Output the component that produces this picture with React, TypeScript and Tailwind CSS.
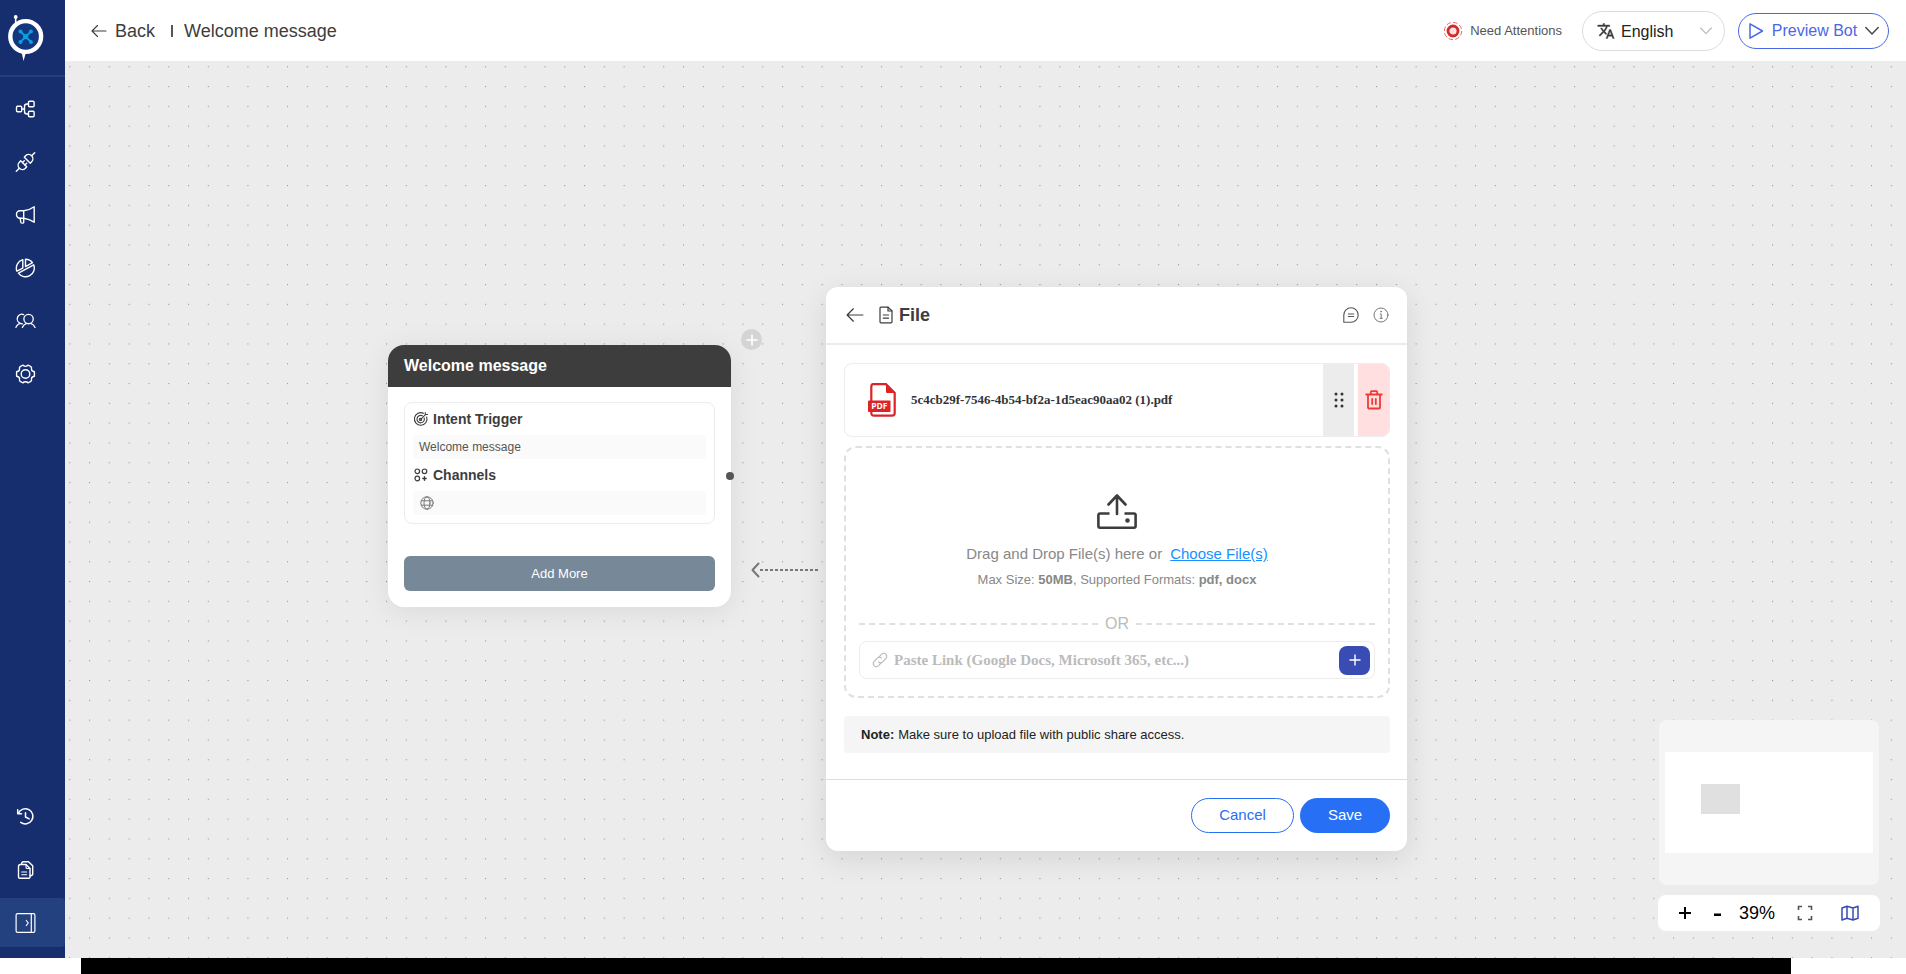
import React from 'react';

type IconProps = { className?: string };

const stroke = {
  fill: 'none',
  stroke: 'currentColor',
  strokeLinecap: 'round' as const,
  strokeLinejoin: 'round' as const,
};

const LogoIcon: React.FC<IconProps> = ({ className }) => (
  <svg viewBox="0 0 36 46" className={className} aria-hidden="true">
    <path d="M7.700 2v8" stroke="#fff" strokeWidth="1.600" />
    <circle cx="7.700" cy="1.900" r="1.900" fill="#fff" />
    <path d="M12.500 36h9c-1 1.500-3.500 1.500-4 3L15.500 46 14 39z" fill="#fff" />
    <circle cx="17.700" cy="21.500" r="15.400" fill="#12377f" stroke="#fff" strokeWidth="4.400" />
    <path d="M12.500 16.500l10.400 10.400M22.900 16.500L12.500 26.900" stroke="#0b9fe0" strokeWidth="1.800" />
    <circle cx="17.700" cy="21.700" r="2.600" fill="#0b9fe0" />
    <circle cx="12.500" cy="16.600" r="2" fill="#0b9fe0" />
    <circle cx="22.900" cy="16.600" r="2" fill="#0b9fe0" />
    <circle cx="12.500" cy="26.900" r="2" fill="#0b9fe0" />
    <circle cx="22.900" cy="26.900" r="2" fill="#0b9fe0" />
  </svg>
);

const FlowIcon: React.FC<IconProps> = ({ className }) => (
  <svg viewBox="0 0 20 20" className={className} {...stroke} strokeWidth="1.400" aria-hidden="true">
    <rect x="1" y="7.300" width="5.200" height="5.400" rx="1" />
    <rect x="13" y="2.300" width="5.600" height="5.400" rx="1" />
    <rect x="13" y="12.300" width="5.600" height="5.400" rx="1" />
    <path d="M6.200 10H9M13 5h-1.500C10 5 9 6 9 7.500v5C9 14 10 15 11.500 15H13" />
  </svg>
);

const PlugIcon: React.FC<IconProps> = ({ className }) => (
  <svg viewBox="0 0 20 20" className={className} {...stroke} strokeWidth="1.400" aria-hidden="true">
    <path d="M.8 19.200l2.800-2.800M16.400 3.600L19.200.8" />
    <path d="M5.200 8.800l6 6-1.500 1.600a4.250 4.250 0 0 1-6-6z" />
    <path d="M14.800 11.200l-6-6 1.500-1.600a4.250 4.250 0 0 1 6 6z" />
    <path d="M7 10.600l1.800-1.800M9.400 13l1.800-1.800" />
  </svg>
);

const MegaphoneIcon: React.FC<IconProps> = ({ className }) => (
  <svg viewBox="0 0 20 20" className={className} {...stroke} strokeWidth="1.400" aria-hidden="true">
    <path d="M8.200 5.800c4-.3 7.500-1.800 10.500-4v15.400c-3-2-6.500-3.500-10.500-4H4.500A3.500 3.500 0 0 1 1 9.700v-.4a3.500 3.500 0 0 1 3.500-3.500z" />
    <path d="M8.200 5.800v11.700c0 .8-2.500.8-2.800 0l-.8-4.300" />
  </svg>
);

const ChartIcon: React.FC<IconProps> = ({ className }) => (
  <svg viewBox="0 0 20 20" className={className} {...stroke} strokeWidth="1.400" aria-hidden="true">
    <path d="M10 1.200a8.800 8.800 0 0 1 7 3.400L10 8.600z" />
    <path d="M18.200 6.800A8.800 8.800 0 0 1 2.900 15.200z" />
    <path d="M7.300 1.700v8.400l-5.900 3.100A8.800 8.800 0 0 1 7.300 1.700z" />
  </svg>
);

const UsersIcon: React.FC<IconProps> = ({ className }) => (
  <svg viewBox="0 0 22 20" className={className} {...stroke} strokeWidth="1.400" aria-hidden="true">
    <circle cx="14.200" cy="8" r="4.900" />
    <path d="M7.700 16.700c.8-2 2.300-3.200 4-3.900M21 16.700c-.8-2-2.300-3.200-4-3.900" />
    <path d="M9 3.200a4.900 4.900 0 0 0-3.500 9.200C3.300 13 1.700 14.500 1 16.700M5.500 12.400l2.200.6" />
  </svg>
);

const SettingsIcon: React.FC<IconProps> = ({ className }) => (
  <svg viewBox="0 0 20 20" className={className} {...stroke} strokeWidth="1.400" aria-hidden="true">
    <circle cx="10" cy="10" r="4.300" />
    <path d="M7.600 1.200c.8 1.500 4 1.500 4.800 0l2.600 1.100c1 .5 1.300 1.300 1 2.500-.2 1.200.6 2.500 2.900 2.900v4.600c-2.300.4-3.100 1.700-2.900 2.900.3 1.200 0 2-1 2.500l-2.600 1.100c-.8-1.500-4-1.500-4.800 0L5 17.700c-1-.5-1.300-1.300-1-2.500.2-1.200-.6-2.500-2.900-2.900V7.700C3.400 7.300 4.200 6 4 4.800c-.3-1.200 0-2 1-2.500z" />
  </svg>
);

const HistoryIcon: React.FC<IconProps> = ({ className }) => (
  <svg viewBox="0 0 20 20" className={className} {...stroke} strokeWidth="1.600" aria-hidden="true">
    <path d="M2.500 6.500A8 8 0 1 1 5 16.200" />
    <path d="M1.800 3v4h4" />
    <path d="M10 6v4.500l3.800 2" />
  </svg>
);

const DocsIcon: React.FC<IconProps> = ({ className }) => (
  <svg viewBox="0 0 20 20" className={className} {...stroke} strokeWidth="1.400" aria-hidden="true">
    <path d="M5 4.500h5.500l4 4V17c0 .8-.5 1.300-1.300 1.300H4.300C3.500 18.300 3 17.800 3 17V6.500c0-1.200.8-2 2-2z" />
    <path d="M6 4.300C6 2.500 6.700 1.800 8 1.800h5l4.200 4V14c0 1-.8 1.700-2.600 1.700" />
    <path d="M10.500 4.500v2.700c0 .8.500 1.300 1.300 1.300h2.700M6.200 12h5M6.200 14.700h5" strokeWidth="1.100" />
  </svg>
);

const PanelIcon: React.FC<IconProps> = ({ className }) => (
  <svg viewBox="0 0 20 20" className={className} {...stroke} strokeWidth="1.200" aria-hidden="true">
    <rect x=".6" y=".6" width="18.800" height="18.800" rx="1.500" />
    <path d="M15.800 1v18" />
    <path d="M10.800 7.500L12.800 10l-2 2.500" />
  </svg>
);

const ArrowLeftIcon: React.FC<IconProps> = ({ className }) => (
  <svg viewBox="0 0 16 16" className={className} {...stroke} strokeWidth="1.100" aria-hidden="true">
    <path d="M15 8H1.200M6.500 2.500L1 8l5.500 5.500" />
  </svg>
);

const AlertIcon: React.FC<IconProps> = ({ className }) => (
  <svg viewBox="0 0 20 20" className={className} aria-hidden="true">
    <circle cx="10" cy="10" r="8.700" fill="none" stroke="#ef6a6a" strokeWidth="1" strokeDasharray="4.500 2.300" />
    <circle cx="10" cy="10" r="5" fill="#fde0e0" stroke="#d02c2c" strokeWidth="2.800" />
  </svg>
);

const TranslateIcon: React.FC<IconProps> = ({ className }) => (
  <svg viewBox="0 0 24 24" className={className} fill="currentColor" stroke="currentColor" strokeWidth=".5" aria-hidden="true">
    <path d="M12.870 15.070l-2.540-2.510.03-.03A17.520 17.520 0 0 0 14.070 6H17V4h-7V2H8v2H1v2h11.170C11.500 7.920 10.440 9.750 9 11.350 8.070 10.320 7.300 9.190 6.690 8h-2c.73 1.630 1.730 3.170 2.980 4.560l-5.090 5.020L4 19l5-5 3.110 3.110.76-2.040zM18.500 10h-2L12 22h2l1.120-3h4.750L21 22h2l-4.500-12zm-2.620 7l1.620-4.330L19.120 17h-3.240z" />
  </svg>
);

const ChevronIcon: React.FC<IconProps> = ({ className }) => (
  <svg viewBox="0 0 14 10" className={className} {...stroke} strokeWidth="1.400" aria-hidden="true">
    <path d="M.8 1.500L7 8l6.200-6.500" />
  </svg>
);

const PlayIcon: React.FC<IconProps> = ({ className }) => (
  <svg viewBox="0 0 16 18" className={className} {...stroke} strokeWidth="1.500" aria-hidden="true">
    <path d="M2 1.800v14.400L14.500 9z" />
  </svg>
);

const TargetIcon: React.FC<IconProps> = ({ className }) => (
  <svg viewBox="0 0 16 16" className={className} {...stroke} strokeWidth="1.100" aria-hidden="true">
    <path d="M10.500 2.300A6.300 6.300 0 1 0 13.700 6" />
    <path d="M9.300 4.800A3.700 3.700 0 1 0 11.200 7" />
    <circle cx="7.500" cy="8.500" r="1.200" />
    <path d="M7.700 8.300l5-5M12.300 1.500V3.500h2.200" />
  </svg>
);

const ChannelsIcon: React.FC<IconProps> = ({ className }) => (
  <svg viewBox="0 0 14 14" className={className} {...stroke} strokeWidth="1.200" aria-hidden="true">
    <circle cx="3.300" cy="3.300" r="2.300" />
    <circle cx="10.500" cy="3.300" r="2.300" />
    <circle cx="3.300" cy="10.500" r="2.300" />
    <path d="M10.500 8.800v3.400M8.800 10.500h3.400" strokeWidth="1.400" />
  </svg>
);

const GlobeIcon: React.FC<IconProps> = ({ className }) => (
  <svg viewBox="0 0 14 14" className={className} {...stroke} strokeWidth="1" aria-hidden="true">
    <circle cx="7" cy="7" r="6.200" />
    <ellipse cx="7" cy="7" rx="3" ry="6.200" />
    <path d="M1.500 4.800h11M1.500 9.200h11" />
  </svg>
);

const FileIcon: React.FC<IconProps> = ({ className }) => (
  <svg viewBox="0 0 14 18" className={className} {...stroke} strokeWidth="1.200" aria-hidden="true">
    <path d="M9 1.200H2c-.7 0-1 .3-1 1v13.600c0 .7.300 1 1 1h10c.7 0 1-.3 1-1V5z" />
    <path d="M9 1.200V5h4M4.300 9h5.200M4.300 12.200h5.200" />
  </svg>
);

const CommentIcon: React.FC<IconProps> = ({ className }) => (
  <svg viewBox="0 0 16 16" className={className} {...stroke} strokeWidth="1.100" aria-hidden="true">
    <path d="M.8 15.200V8a7.200 7.200 0 1 1 7.200 7.200z" />
    <path d="M5.300 7h5.400M5.300 9.500h5.400" />
  </svg>
);

const InfoIcon: React.FC<IconProps> = ({ className }) => (
  <svg viewBox="0 0 16 16" className={className} {...stroke} strokeWidth="1" aria-hidden="true">
    <circle cx="8" cy="8" r="7" />
    <path d="M7.300 7h.9v4.200M7 11.300h2.300" />
    <circle cx="8" cy="4.700" r=".4" />
  </svg>
);

const PdfIcon: React.FC<IconProps> = ({ className }) => (
  <svg viewBox="0 0 28 34" className={className} aria-hidden="true">
    <path d="M5 1.200h13L26.700 10v20c0 1.700-1 2.700-2.700 2.700H6c-1.700 0-2.700-1-2.700-2.700V4c0-1.800.9-2.800 1.700-2.800z" fill="#fff" stroke="#dc2328" strokeWidth="2.200" />
    <path d="M18 .8L27.300 10H19.500c-1 0-1.500-.5-1.500-1.500z" fill="#dc2328" />
    <rect x="0" y="17.500" width="22.500" height="11.500" rx=".8" fill="#dc2328" />
    <text x="11.300" y="26.400" textAnchor="middle" fontSize="8.500" fontWeight="700" fontFamily="Open Sans, sans-serif" fill="#fff">PDF</text>
  </svg>
);

const TrashIcon: React.FC<IconProps> = ({ className }) => (
  <svg viewBox="0 0 18 20" className={className} {...stroke} strokeWidth="1.800" aria-hidden="true">
    <path d="M1.200 4.500h15.600M5.800 4.500V2c0-.6.3-.9.900-.9h4.600c.6 0 .9.300.9.900v2.500M3 4.500v13c0 .7.300 1 1 1h10c.7 0 1-.3 1-1v-13" />
    <path d="M7.200 9v5M10.800 9v5" />
  </svg>
);

const GripIcon: React.FC<IconProps> = ({ className }) => (
  <svg viewBox="0 0 10 16" className={className} fill="currentColor" aria-hidden="true">
    {[2, 8, 14].map((y) => (
      <React.Fragment key={y}>
        <circle cx="2" cy={y} r="1.500" />
        <circle cx="8" cy={y} r="1.500" />
      </React.Fragment>
    ))}
  </svg>
);

const UploadIcon: React.FC<IconProps> = ({ className }) => (
  <svg viewBox="0 0 40 36" className={className} {...stroke} strokeWidth="2.600" aria-hidden="true">
    <path d="M12.500 19.500H3c-1 0-1.600.5-1.600 1.600v11c0 1 .6 1.700 1.600 1.700h34c1 0 1.600-.7 1.600-1.700v-11c0-1.100-.6-1.600-1.600-1.600h-9.500" strokeLinecap="butt" />
    <path d="M20 20V1.800M11.500 10.500L20 1.500l8.500 9" />
    <circle cx="30.500" cy="26.500" r="1" fill="currentColor" />
  </svg>
);

const LinkIcon: React.FC<IconProps> = ({ className }) => (
  <svg viewBox="0 0 16 16" className={className} {...stroke} strokeWidth="1.100" aria-hidden="true">
    <path d="M6.500 5.500l3-3.200c1.400-1.400 3-1.400 4.200-.2s1.400 3 .2 4.400l-3.200 3.300c-1.300 1.300-3 1.300-4.100.2" />
    <path d="M9.500 10.500l-3 3.200c-1.400 1.400-3 1.400-4.200.2s-1.400-3-.2-4.400l3.200-3.300c1.300-1.300 3-1.300 4.100-.2" />
  </svg>
);

const FitIcon: React.FC<IconProps> = ({ className }) => (
  <svg viewBox="0 0 16 16" className={className} fill="none" stroke="currentColor" strokeWidth="1.600" aria-hidden="true">
    <path d="M1.500 5V1.500H5M11 1.500h3.500V5M14.500 11v3.500H11M5 14.500H1.500V11" />
  </svg>
);

const MapIcon: React.FC<IconProps> = ({ className }) => (
  <svg viewBox="0 0 18 16" className={className} {...stroke} strokeWidth="1.500" aria-hidden="true">
    <path d="M1 3l5-1.800L12 3l5-1.700v11.900L12 15l-6-1.800L1 15zM6 1.200v12M12 3v12" />
  </svg>
);

const navItems = [
  { label: 'Flows', icon: FlowIcon },
  { label: 'Integrations', icon: PlugIcon },
  { label: 'Campaigns', icon: MegaphoneIcon },
  { label: 'Analytics', icon: ChartIcon },
  { label: 'Users', icon: UsersIcon },
  { label: 'Settings', icon: SettingsIcon },
];

const Sidebar: React.FC = () => (
  <aside className="flex w-[65px] shrink-0 flex-col bg-[#162d6e] text-white">
    <div className="flex h-[77px] items-start border-b-2 border-[#24417f] pl-2 pt-[15px]">
      <LogoIcon className="h-[46px] w-9" />
    </div>
    <nav className="flex flex-1 flex-col pt-[7px]">
      {navItems.map(({ label, icon: Icon }) => (
        <button key={label} type="button" aria-label={label} className="mb-1 flex h-[49px] w-full items-center pl-[15px]">
          <Icon className="h-5 w-[21px]" />
        </button>
      ))}
    </nav>
    <div className="flex flex-col pb-[11px]">
      <button type="button" aria-label="History" className="mb-1 flex h-[49px] items-center pl-[15px]">
        <HistoryIcon className="h-[19px] w-[21px]" />
      </button>
      <button type="button" aria-label="Documents" className="mb-1 flex h-[49px] items-center pl-[15px]">
        <DocsIcon className="h-5 w-[21px]" />
      </button>
      <button type="button" aria-label="Expand menu" className="flex h-[49px] items-center rounded-r bg-[#24417f] pl-[15px]">
        <PanelIcon className="h-5 w-[21px]" />
      </button>
    </div>
  </aside>
);

const Header: React.FC = () => (
  <header className="flex h-[61px] shrink-0 items-center bg-white pl-[26px] pr-[17px]">
    <button type="button" className="flex items-center gap-2 text-lg text-[#3d3d3d]">
      <ArrowLeftIcon className="size-4" />
      <span>Back</span>
    </button>
    <span className="ml-4 mr-[11px] h-3 w-0.5 bg-[#555]" />
    <h1 className="flex-1 text-lg text-[#3d3d3d]">Welcome message</h1>
    <div className="flex items-center gap-[7px] text-[13px] text-[#555]">
      <AlertIcon className="size-5" />
      Need Attentions
    </div>
    <div className="relative ml-5 flex h-10 w-[143px] items-center rounded-full border border-[#dcdcdc] text-[#222]">
      <TranslateIcon className="pointer-events-none absolute left-3.5 size-[18px] text-[#3d3d3d]" />
      <select aria-label="Language" className="h-full w-full appearance-none rounded-full bg-transparent pl-[38px] pr-8 pt-0.5 text-base">
        <option>English</option>
      </select>
      <ChevronIcon className="pointer-events-none absolute right-3 h-2.5 w-3 text-[#bbb]" />
    </div>
    <button type="button" className="ml-[13px] flex h-9 w-[151px] items-center justify-between rounded-full border border-[#4a67e8] px-[9px] text-[#4a67e8]">
      <PlayIcon className="h-[18px] w-4" />
      <span className="text-base">Preview Bot</span>
      <ChevronIcon className="h-2.5 w-3.5 text-[#444]" />
    </button>
  </header>
);

const DotGrid: React.FC = () => (
  <svg className="absolute inset-0 h-full w-full" aria-hidden="true">
    <pattern id="dots" x="4.200" y="5.200" width="19.800" height="19.800" patternUnits="userSpaceOnUse">
      <circle cx=".6" cy=".6" r=".6" fill="#888" />
    </pattern>
    <rect width="100%" height="100%" fill="url(#dots)" />
  </svg>
);

const WelcomeNode: React.FC = () => (
  <section className="absolute left-[323px] top-[284px] w-[343px] rounded-2xl bg-white shadow-[0_4px_30px_rgba(0,0,0,0.08)]">
    <h2 className="flex h-[42px] items-center rounded-t-2xl bg-[#3d3d3d] px-4 text-base font-bold text-white">Welcome message</h2>
    <div className="px-4 pb-4 pt-[15px]">
      <div className="rounded-lg border border-[#ececec] px-2 pb-2">
        <h3 className="flex h-8 items-center gap-1 text-sm font-bold text-[#3d3d3d]">
          <TargetIcon className="size-4" />
          Intent Trigger
        </h3>
        <div className="flex h-6 items-center rounded bg-[#fafafa] px-1.5 text-xs text-[#555]">Welcome message</div>
        <h3 className="flex h-8 items-center gap-1 text-sm font-bold text-[#3d3d3d]">
          <span className="flex w-4 justify-center">
            <ChannelsIcon className="size-3.5" />
          </span>
          Channels
        </h3>
        <div className="flex h-6 items-center rounded bg-[#fafafa] px-[7px] text-[#777]">
          <GlobeIcon className="size-3.5" />
        </div>
      </div>
      <button type="button" className="mt-8 h-[35px] w-full rounded-md bg-[#778899] text-[13px] text-white">Add More</button>
    </div>
    <span className="absolute -right-[3px] top-[127px] size-2 rounded-full bg-[#555]" />
    <button type="button" aria-label="Add node" className="absolute -right-[31px] -top-4 flex size-[21px] items-center justify-center rounded-full bg-[#d4d4d4] text-white">
      <svg viewBox="0 0 12 12" className="size-3" {...stroke} strokeWidth="1.600" aria-hidden="true">
        <path d="M6 1v10M1 6h10" />
      </svg>
    </button>
    <svg viewBox="0 0 68 16" className="absolute -right-[88px] top-[217px] h-4 w-[68px] text-[#777]" {...stroke} aria-hidden="true">
      <path d="M7.500 1.500L1.500 8l6 6.500" strokeWidth="2" />
      <path d="M9 8h58" strokeWidth="2" strokeDasharray="3 2" strokeLinecap="butt" />
    </svg>
  </section>
);

const FileDialog: React.FC = () => (
  <section role="dialog" aria-label="File" className="absolute left-[761px] top-[226px] w-[581px] rounded-xl bg-white shadow-[0_8px_30px_rgba(0,0,0,0.1)]">
    <div className="flex h-[58px] items-center border-b-2 border-[#ececec] px-[18px] text-[#3d3d3d]">
      <button type="button" aria-label="Back to blocks" className="ml-0.5 mr-[15px]">
        <ArrowLeftIcon className="size-[18px]" />
      </button>
      <FileIcon className="h-[18px] w-3.5" />
      <h2 className="ml-1.5 flex-1 text-lg font-bold">File</h2>
      <button type="button" aria-label="Comments" className="mr-3.5 text-[#555]">
        <CommentIcon className="size-4" />
      </button>
      <button type="button" aria-label="Info" className="text-[#777]">
        <InfoIcon className="size-4" />
      </button>
    </div>

    <div className="pb-[26px] pl-[18px] pr-[17px] pt-[18px]">
      <div className="flex h-[74px] overflow-hidden rounded-lg border border-[#ececec]">
        <div className="flex flex-1 items-center gap-[15px] pl-[23px] text-[#333]">
          <PdfIcon className="h-[34px] w-7" />
          <span className="font-['Liberation_Serif',serif] text-[13px] font-bold">5c4cb29f-7546-4b54-bf2a-1d5eac90aa02 (1).pdf</span>
        </div>
        <button type="button" aria-label="Reorder file" className="mr-1 flex w-[31px] items-center justify-center bg-[#ececec] text-[#333]">
          <GripIcon className="h-4 w-2.5" />
        </button>
        <button type="button" aria-label="Delete file" className="flex w-[31px] items-center justify-center bg-[#ffdfdf] text-[#f03a36]">
          <TrashIcon className="h-5 w-[18px]" />
        </button>
      </div>

      <div className="mt-[9px] flex flex-col items-center rounded-xl border-2 border-dashed border-[#e0e0e0] px-[13px] pb-[17px] pt-[46px]">
        <UploadIcon className="h-9 w-10 text-[#3d3d3d]" />
        <p className="mt-3 flex h-6 items-center gap-2 text-[15px] text-[#888]">
          Drag and Drop File(s) here or
          <a href="#choose" className="text-[#1890ff] underline">Choose File(s)</a>
        </p>
        <p className="mt-1 h-5 text-[13px] leading-5 text-[#888]">
          Max Size: <strong>50MB</strong>, Supported Formats: <strong>pdf, docx</strong>
        </p>
        <div className="mt-[22px] flex h-6 w-full items-center gap-[7px] text-base text-[#bbb]">
          <span className="flex-1 border-t-2 border-dashed border-[#e0e0e0]" />
          OR
          <span className="flex-1 border-t-2 border-dashed border-[#e0e0e0]" />
        </div>
        <div className="mt-[5px] flex h-[38px] w-full items-center rounded-lg border border-[#ececec] pl-3 pr-1 text-[#bbb]">
          <LinkIcon className="size-4 shrink-0" />
          <input
            type="text"
            aria-label="File link"
            placeholder="Paste Link (Google Docs, Microsoft 365, etc...)"
            className="min-w-0 flex-1 px-1.5 font-['Liberation_Serif',serif] text-[15px] font-bold text-[#3d3d3d] outline-none placeholder:text-[#bbb]"
          />
          <button type="button" aria-label="Add link" className="flex h-[29px] w-[31px] items-center justify-center rounded-lg bg-[#384cb3] text-white">
            <svg viewBox="0 0 12 12" className="size-3" {...stroke} strokeWidth="1.400" aria-hidden="true">
              <path d="M6 1v10M1 6h10" />
            </svg>
          </button>
        </div>
      </div>

      <p className="mt-[18px] flex h-[37px] items-center gap-1 rounded bg-[#f5f5f5] px-[17px] text-[13px] text-[#222]">
        <strong>Note:</strong> Make sure to upload file with public share access.
      </p>
    </div>

    <div className="flex h-[72px] items-center justify-end gap-1.5 border-t border-[#ddd] px-[17px] text-[15px]">
      <button type="button" className="h-[35px] w-[103px] rounded-full border border-[#2770f5] text-[#2770f5]">Cancel</button>
      <button type="button" className="h-[35px] w-[90px] rounded-full bg-[#2770f5] text-white">Save</button>
    </div>
  </section>
);

const CanvasControls: React.FC = () => (
  <div className="absolute bottom-[27px] right-[26px] w-[222px]">
    <div className="mx-px flex h-[165px] items-center rounded-lg bg-[#f5f5f5] px-1.5">
      <div className="h-[101px] w-full bg-white pl-9 pt-8">
        <div className="h-[30px] w-[39px] bg-[#e0e0e0]" />
      </div>
    </div>
    <div className="mt-2.5 flex h-9 items-center rounded-lg bg-white pl-5 pr-[21px] text-lg text-black">
      <button type="button" aria-label="Zoom in" className="flex w-3.5 justify-center">
        <svg viewBox="0 0 12 12" className="size-3" stroke="currentColor" strokeWidth="2" aria-hidden="true">
          <path d="M6 0v12M0 6h12" />
        </svg>
      </button>
      <button type="button" aria-label="Zoom out" className="ml-5 flex w-3 justify-center pt-1">
        <svg viewBox="0 0 8 4" className="h-1 w-2" fill="currentColor" aria-hidden="true">
          <path d="M0 .5h7v2.500H0z" />
        </svg>
      </button>
      <span className="ml-[15px]">39%</span>
      <button type="button" aria-label="Fit view" className="ml-auto text-[#555]">
        <FitIcon className="size-4" />
      </button>
      <button type="button" aria-label="Toggle map" className="ml-7 text-[#384cb3]">
        <MapIcon className="h-4 w-[18px]" />
      </button>
    </div>
  </div>
);

export default function App() {
  return (
    <div className="flex h-screen flex-col bg-white font-['Liberation_Sans',Arial,sans-serif]">
      <div className="flex min-h-0 flex-1">
        <Sidebar />
        <div className="flex min-w-0 flex-1 flex-col">
          <Header />
          <main className="relative flex-1 overflow-hidden bg-[#ececec]">
            <DotGrid />
            <WelcomeNode />
            <FileDialog />
            <CanvasControls />
          </main>
        </div>
      </div>
      <div className="ml-[81px] mr-[115px] h-4 shrink-0 bg-black" />
    </div>
  );
}
